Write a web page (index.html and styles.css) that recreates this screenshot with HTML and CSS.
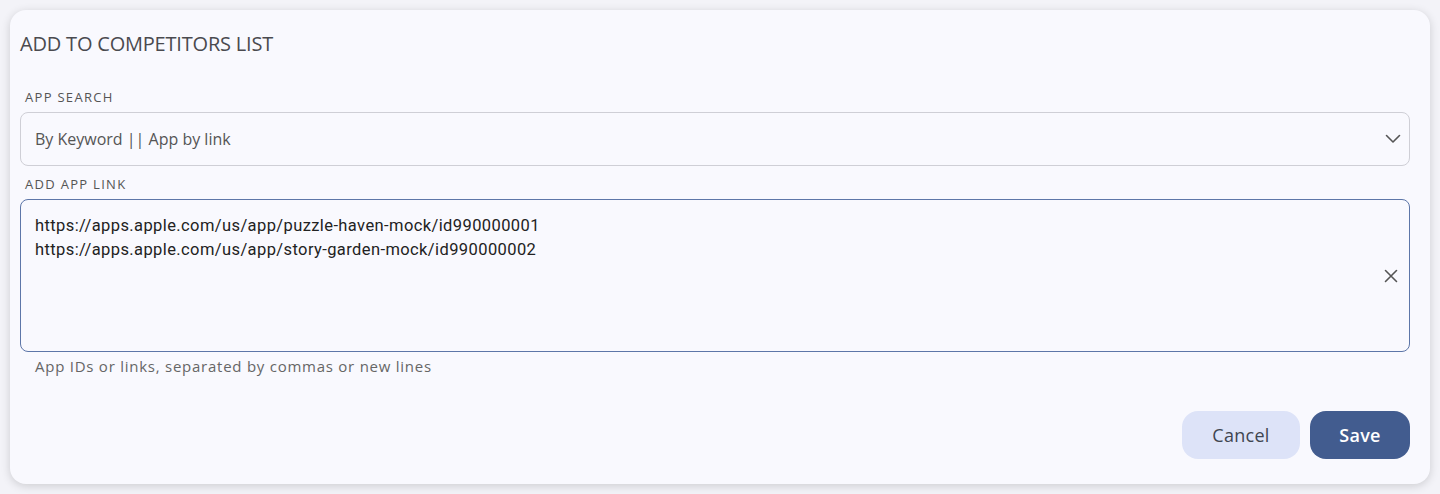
FILE: index.html
```html
<!DOCTYPE html>
<html lang="en">
<head>
<meta charset="utf-8">
<title>Add to competitors list</title>
<link rel="stylesheet" href="styles.css">
</head>
<body>
<div class="card">
  <h2 class="title">ADD TO COMPETITORS LIST</h2>
  <div class="field field-search">
    <div class="label">APP SEARCH</div>
    <div class="select">
      <span class="select-text">By Keyword || App by link</span>
      <svg class="chevron" width="18" height="18" viewBox="0 0 18 18"><path d="M2.5 5.5 L9 12 L15.5 5.5" fill="none" stroke="#555" stroke-width="1.6" stroke-linecap="round" stroke-linejoin="round"/></svg>
    </div>
  </div>
  <div class="field field-link">
    <div class="label">ADD APP LINK</div>
    <div class="textarea">
      <div class="lines">
        <div>https://apps.apple.com/us/app/puzzle-haven-mock/id990000001</div>
        <div>https://apps.apple.com/us/app/story-garden-mock/id990000002</div>
      </div>
      <svg class="clear" width="14" height="14" viewBox="0 0 14 14"><path d="M1.5 1.5 L12.5 12.5 M12.5 1.5 L1.5 12.5" fill="none" stroke="#555" stroke-width="1.6" stroke-linecap="round"/></svg>
    </div>
    <div class="hint">App IDs or links, separated by commas or new lines</div>
  </div>
  <div class="actions">
    <button class="btn btn-cancel">Cancel</button>
    <button class="btn btn-save">Save</button>
  </div>
</div>
</body>
</html>
```
FILE: styles.css
```css
html, body {
  margin: 0;
  padding: 0;
}
body {
  background: #f3f3f8;
  padding: 10px;
  font-family: "Open Sans", "Noto Sans", sans-serif;
  color: #333;
}
.card {
  background: #f9f9fe;
  border-radius: 16px;
  box-shadow: 0 2px 10px rgba(0, 0, 0, 0.16);
  padding: 22px 20px 25px 10px;
  height: 474px;
  box-sizing: border-box;
  display: flex;
  flex-direction: column;
}
.title {
  margin: 0;
  font-size: 20px;
  font-weight: 400;
  line-height: 24px;
  color: #4a4a4f;
  letter-spacing: -0.2px;
}
.field-search {
  margin-top: 33px;
}
.label {
  font-size: 13px;
  line-height: 16px;
  letter-spacing: 1.3px;
  color: #555;
  padding-left: 5px;
  margin-bottom: 7px;
}
.select {
  height: 54px;
  box-sizing: border-box;
  border: 1px solid #cfcfd6;
  border-radius: 8px;
  display: flex;
  align-items: center;
  justify-content: space-between;
  padding: 0 7px 0 14px;
}
.select-text {
  font-family: "Open Sans", sans-serif;
  font-size: 16px;
  color: #555;
}
.field-link {
  margin-top: 10px;
}
.textarea {
  height: 153px;
  box-sizing: border-box;
  border: 1px solid #5d76a8;
  border-radius: 8px;
  display: flex;
  align-items: center;
  padding: 0 11px 0 14px;
}
.lines {
  flex: 1;
  align-self: flex-start;
  padding-top: 14px;
  font-family: Roboto, sans-serif;
  font-size: 16.5px;
  letter-spacing: 0.4px;
  line-height: 24px;
  color: #222;
}
.hint {
  font-size: 15px;
  letter-spacing: 0.75px;
  line-height: 18px;
  color: #666;
  padding-left: 15px;
  margin-top: 5px;
}
.actions {
  margin-top: auto;
  display: flex;
  justify-content: flex-end;
  gap: 10px;
}
.btn {
  height: 48px;
  border: none;
  border-radius: 16px;
  font-family: "Open Sans", sans-serif;
  font-size: 18px;
  letter-spacing: 0.3px;
  cursor: pointer;
}
.btn-cancel {
  width: 118px;
  background: #dde3f8;
  color: #3f4550;
}
.btn-save {
  width: 100px;
  background: #425c8f;
  color: #fff;
  font-weight: 600;
}
```
